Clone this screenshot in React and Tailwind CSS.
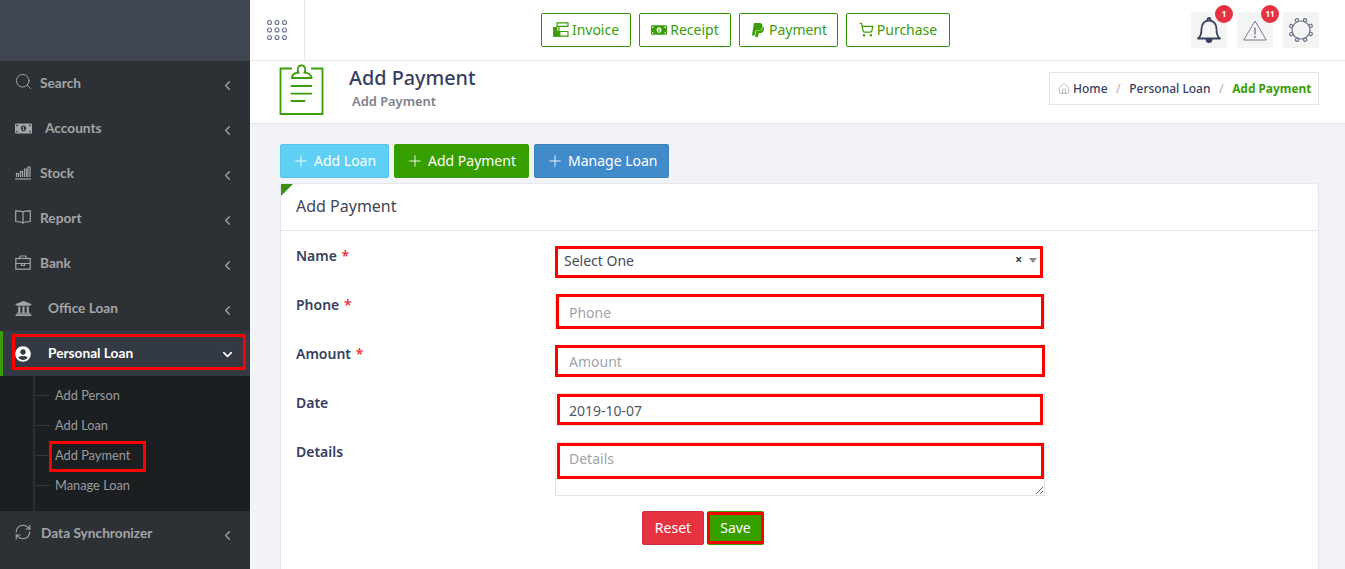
import { Search, ChevronLeft, ChevronDown, Plus, RefreshCw, Home, ShoppingCart } from "lucide-react"
import { FaPaypal, FaMoneyBillAlt, FaUniversity, FaUserCircle } from "react-icons/fa"

const sideFont = "font-['Lato',sans-serif]"

function StockIcon() {
  return (
    <svg width="16" height="14" viewBox="0 0 16 14" fill="none" stroke="currentColor" strokeWidth="1.2">
      <path d="M0 13h16" />
      <path d="M1.5 11V7.5h2V11M5.5 11V5.5h2V11M9.5 11V3h2v8M13 11V1h2v10" />
    </svg>
  )
}

function BookIcon() {
  return (
    <svg width="16" height="14" viewBox="0 0 16 14" fill="none" stroke="currentColor" strokeWidth="1.2" className="-mt-[3px]">
      <path d="M8 2C6.5 1 3 .8.7.8v10.700c2.300 0 5.800.2 7.300 1.700 1.500-1.500 5-1.700 7.300-1.700V.8C13 .8 9.500 1 8 2zM8 2v11.200" />
    </svg>
  )
}

function CaseIcon() {
  return (
    <svg width="16" height="15" viewBox="0 0 16 15" fill="none" stroke="currentColor" strokeWidth="1.200" className="-mt-[2px]">
      <rect x="0.800" y="3.500" width="14.400" height="10.700" />
      <path d="M.8 8.500h14.400M4 3.500 5.500 1h5L12 3.500M6.500 8.500v2h3v-2" />
    </svg>
  )
}

function InvoiceIcon() {
  return (
    <svg width="16" height="15" viewBox="0 0 16 15" fill="none" stroke="currentColor" strokeWidth="1.200">
      <path d="M4 .8h11v3.500H4zM4 4.300h2v5H4M5.500 9.500H15v4.700H.8v-4.700h4.700" />
      <path d="M.8 5.500h3v3.500h-3zM.8 10.500h6v3.500h-6z" fill="currentColor" />
    </svg>
  )
}

function ClipboardIcon() {
  return (
    <svg width="45" height="52" viewBox="0 0 45 52" fill="none" stroke="#3a9d0a" strokeWidth="1.800" className="block">
      <path d="M13 5.500H1.500v45.500h42V5.500H32" />
      <path d="M13 15c0-3 3-5 6.500-5.500C18.500 8 18.500 6.500 19 5c1-3.500 6-3.500 7 0 .5 1.500.5 3-.5 4.500C29 10 32.500 12 32.500 15z" />
      <path d="M11.700 23h21.300M11.700 30.700h21.300M11.700 38h14.500" />
    </svg>
  )
}

function GridIcon() {
  const dots = []
  for (let y = 0; y < 3; y++) {
    for (let x = 0; x < 3; x++) {
      dots.push(<circle key={`${x}-${y}`} cx={2.500 + x * 7.500} cy={2.500 + y * 7.500} r="2" />)
    }
  }
  return (
    <svg width="21" height="21" viewBox="0 0 21 21" fill="none" stroke="#6b7390" strokeWidth="1.100">
      {dots}
    </svg>
  )
}

function BellIcon() {
  return (
    <svg width="24" height="26" viewBox="0 0 24 26" fill="none" stroke="#38435f" strokeWidth="1.800">
      <path d="M1 21.500c3-2 3.500-5 3.500-9.500 0-5 3-8.500 7.500-8.500s7.500 3.500 7.500 8.500c0 4.500.5 7.500 3.500 9.500z" strokeLinejoin="round" />
      <path d="M10.500 3.500V2.500a1.500 1.500 0 0 1 3 0v1" />
      <path d="M9.500 22.500a2.500 2.500 0 0 0 5 0z" fill="#38435f" />
    </svg>
  )
}

function WarningIcon() {
  return (
    <svg width="24" height="21" viewBox="0 0 24 21" fill="none" stroke="#747b90" strokeWidth="1">
      <path d="M12 1 23.300 20H.7z" strokeLinejoin="round" />
      <path d="M12 7.500v7M12 16v2" strokeWidth="1.400" />
    </svg>
  )
}

function GearIcon() {
  const knobs = [0, 45, 90, 135, 180, 225, 270, 315]
  return (
    <svg width="26" height="26" viewBox="0 0 26 26" fill="none" stroke="#6b7287" strokeWidth="1.200">
      <circle cx="13" cy="13" r="9" />
      {knobs.map((a) => (
        <rect key={a} x="11.500" y="1" width="3" height="3" rx="0.800" fill="#f4f4f5" transform={`rotate(${a + 22} 13 13)`} />
      ))}
    </svg>
  )
}

function Mark({ className }) {
  return <span className={`absolute border-[3px] border-[#ff0000] pointer-events-none ${className}`} />
}

function MenuItem({ icon, label, gap }) {
  return (
    <div className={`h-[45px] flex items-center pl-[15px] pr-[15px] pb-[1px] text-[#a3a5a7] text-[13.700px] font-bold ${sideFont}`}>
      <span className="w-[16px] flex justify-center shrink-0">{icon}</span>
      <span className={gap}>{label}</span>
      <ChevronLeft size={15} strokeWidth={2} className="ml-auto mt-[4px]" />
    </div>
  )
}

function SubItem({ label, marked }) {
  return (
    <div className={`relative h-[30px] flex items-center pl-[55px] text-[#9a9c9e] text-[12.800px] ${sideFont}`}>
      <span className="absolute left-[35px] top-[14px] w-[15px] h-px bg-[#33383d]" />
      {label}
      {marked && <Mark className="left-[49px] top-0 w-[97px] h-[31px]" />}
    </div>
  )
}

function Sidebar() {
  return (
    <aside className="w-[250px] shrink-0 bg-[#2d3135] flex flex-col">
      <div className="h-[61px] bg-[#40464f]" />
      <MenuItem icon={<Search size={19} strokeWidth={1.200} className="shrink-0 -mt-[3px]" />} label="Search" gap="ml-[9px]" />
      <MenuItem icon={<FaMoneyBillAlt size={17} className="shrink-0" />} label="Accounts" gap="ml-[14px]" />
      <MenuItem icon={<StockIcon />} label="Stock" gap="ml-[9px]" />
      <MenuItem icon={<BookIcon />} label="Report" gap="ml-[9px]" />
      <MenuItem icon={<CaseIcon />} label="Bank" gap="ml-[9px]" />
      <MenuItem icon={<FaUniversity size={17} className="shrink-0" />} label="Office Loan" gap="ml-[17px]" />
      <div className={`relative h-[45px] flex items-center pl-[15px] pr-[15px] bg-[#343a43] border-l-[3px] border-[#3a9d0a] text-white text-[13.700px] font-bold ${sideFont}`}>
        <span className="w-[16px] flex justify-center shrink-0 -ml-[3px]">
          <FaUserCircle size={16} />
        </span>
        <span className="ml-[17px]">Personal Loan</span>
        <ChevronDown size={15} strokeWidth={2.500} className="ml-auto mt-[2px]" />
        <Mark className="left-[9px] top-[3px] w-[234px] h-[36px]" />
      </div>
      <div className="relative h-[135px] pt-[5px] bg-[#1c1f22]">
        <span className="absolute left-[33px] top-0 bottom-0 w-[2px] bg-[#2c3034]" />
        <SubItem label="Add Person" />
        <SubItem label="Add Loan" />
        <SubItem label="Add Payment" marked />
        <SubItem label="Manage Loan" />
      </div>
      <MenuItem icon={<RefreshCw size={18} strokeWidth={1.500} className="shrink-0 -mt-[2px]" />} label="Data Synchronizer" gap="ml-[10px]" />
    </aside>
  )
}

function QuickLink({ icon, label, className }) {
  return (
    <div className={`h-[34px] flex items-center justify-center gap-[3px] pb-[1px] border border-[#2f9400] rounded-[2px] text-[#3a9d0a] text-[14px] ${className}`}>
      {icon}
      {label}
    </div>
  )
}

function Alert({ children, badge }) {
  return (
    <div className="relative w-[36px] h-[36px] bg-[#f4f4f5] flex items-center justify-center">
      {children}
      {badge && (
        <span className="absolute left-[24px] top-[-7px] w-[18px] h-[18px] rounded-full bg-[#e63342] text-white text-[8px] font-bold flex items-center justify-center">
          {badge}
        </span>
      )}
    </div>
  )
}

function Topbar() {
  return (
    <header className="h-[61px] shrink-0 bg-white border-b border-[#e3e6ee] flex items-center">
      <div className="w-[55px] h-full border-r border-[#e3e6ee] flex items-center pl-[17px]">
        <GridIcon />
      </div>
      <div className="ml-[236px] flex gap-[8px]">
        <QuickLink className="w-[90px]" icon={<InvoiceIcon />} label="Invoice" />
        <QuickLink className="w-[92px]" icon={<FaMoneyBillAlt size={16} />} label="Receipt" />
        <QuickLink className="w-[99px]" icon={<FaPaypal size={16} />} label="Payment" />
        <QuickLink className="w-[104px]" icon={<ShoppingCart size={15} strokeWidth={2} />} label="Purchase" />
      </div>
      <div className="ml-auto mr-[26px] flex gap-[10px]">
        <Alert badge="1"><BellIcon /></Alert>
        <Alert badge="11"><WarningIcon /></Alert>
        <Alert><GearIcon /></Alert>
      </div>
    </header>
  )
}

function PageTitle() {
  return (
    <div className="h-[63px] shrink-0 bg-white border-b border-[#e3e6ee] flex pl-[29px] pr-[26px]">
      <div className="pt-[2px]">
        <ClipboardIcon />
      </div>
      <div className="ml-[25px]">
        <h1 className="text-[19.800px] leading-[27px] font-medium text-[#34405e] mt-[3px]">Add Payment</h1>
        <p className="text-[12.900px] leading-[18px] font-semibold text-[#7d7f88] ml-[3px] mt-[1px]">Add Payment</p>
      </div>
      <div className="ml-auto mt-[11px] h-[33px] w-[270px] flex items-center pl-[8px] pt-[1px] border border-[#e3e6ee] text-[12px] font-medium text-[#34405e]">
        <Home size={12} strokeWidth={1} className="text-[#808080] mr-[3px]" />
        <span>Home</span>
        <span className="mx-[8.500px] text-[#b5b8bf]">/</span>
        <span>Personal Loan</span>
        <span className="mx-[8.500px] text-[#b5b8bf]">/</span>
        <span className="font-bold text-[11.900px] text-[#3a9d0a]">Add Payment</span>
      </div>
    </div>
  )
}

function ActionButton({ label, className }) {
  return (
    <div className={`h-[34px] flex items-center pl-[11px] pb-[1px] gap-[4px] rounded-[2px] border text-white text-[14px] ${className}`}>
      <Plus size={18} strokeWidth={1.200} />
      {label}
    </div>
  )
}

function Row({ label, required, children, className }) {
  return (
    <div className={`flex ${className}`}>
      <label className="w-[259px] shrink-0 text-[14px] leading-[20px] font-semibold text-[#34405e]">
        {label}
        {required && <span className="ml-[1px] text-[#e63342]"> *</span>}
      </label>
      <div className="relative w-[490px]">{children}</div>
    </div>
  )
}

function PaymentForm() {
  const inputCls = "block w-full h-full pl-[13px] bg-white border border-[#e3e3e3] text-[14px] text-[#50565f] placeholder:text-[#a0a3ab] outline-none"
  return (
    <form className="pt-[15px] pl-[15px]">
      <Row label="Name" required className="h-[49px]">
        <div className="relative h-[32px] flex items-center pl-[9px] pr-[5px] pb-[4px] text-[14px] text-[#444b55]">
          Select One
          <span className="ml-auto text-[12px] font-bold text-[#333] mr-[7px]">×</span>
          <span className="w-0 h-0 border-x-[4px] border-x-transparent border-t-[5px] border-t-[#888] mr-[3px]" />
          <Mark className="left-0 top-0 w-[488px] h-[32px]" />
        </div>
      </Row>
      <Row label="Phone" required className="h-[49px]">
        <div className="relative h-[34px]">
          <input className={inputCls} placeholder="Phone" readOnly />
          <Mark className="left-[1px] top-[-1px] w-[488px] h-[35px]" />
        </div>
      </Row>
      <Row label="Amount" required className="h-[49px]">
        <div className="relative h-[32px] mt-[1px]">
          <input className={inputCls} placeholder="Amount" readOnly />
          <Mark className="left-0 top-0 w-[490px] h-[32px]" />
        </div>
      </Row>
      <Row label="Date" className="h-[49px]">
        <div className="relative h-[33px]">
          <input className={`${inputCls} pt-[2px]`} value="2019-10-07" readOnly />
          <Mark className="left-[2px] top-[1px] w-[486px] h-[31px]" />
        </div>
      </Row>
      <Row label="Details" className="h-[69px]">
        <div className="relative h-[54px]">
          <textarea className={`${inputCls} pt-[5px]`} placeholder="Details" readOnly />
          <Mark className="left-[2px] top-[1px] w-[487px] h-[36px]" />
        </div>
      </Row>
      <div className="flex gap-[3px] ml-[346px]">
        <div className="w-[62px] h-[34px] flex items-center justify-center pb-[2px] rounded-[2px] bg-[#e63342] border border-[#d12c3a] text-white text-[14px]">Reset</div>
        <div className="relative w-[57px] h-[34px] flex items-center justify-center pb-[2px] rounded-[2px] bg-[#379e00] text-white text-[14px]">
          Save
          <Mark className="left-0 top-[1px] w-[57px] h-[32px]" />
        </div>
      </div>
    </form>
  )
}

function Card() {
  return (
    <section className="relative mt-[5px] h-[420px] bg-white border border-[#e3e6ee] rounded-t-[2px]">
      <span className="absolute left-0 top-0 w-0 h-0 border-t-[12px] border-r-[12px] border-t-[#3a8f12] border-r-transparent" />
      <div className="h-[47px] pb-[2px] border-b border-[#e3e6ee] flex items-center pl-[15px] text-[16px] text-[#3f4754]">Add Payment</div>
      <PaymentForm />
    </section>
  )
}

export default function App() {
  return (
    <div className="w-[1345px] h-[569px] overflow-hidden flex bg-[#f1f3f7] font-['Noto_Sans',sans-serif]">
      <Sidebar />
      <main className="flex-1 flex flex-col min-w-0">
        <Topbar />
        <PageTitle />
        <div className="pt-[20px] pl-[30px] pr-[26px]">
          <div className="flex gap-[5px]">
            <ActionButton label="Add Loan" className="w-[109px] bg-[#5fd0f3] border-[#57c3e4]" />
            <ActionButton label="Add Payment" className="w-[135px] bg-[#379e00] border-[#379e00]" />
            <ActionButton label="Manage Loan" className="w-[135px] bg-[#428bca] border-[#3c80ba]" />
          </div>
          <Card />
        </div>
      </main>
    </div>
  )
}
